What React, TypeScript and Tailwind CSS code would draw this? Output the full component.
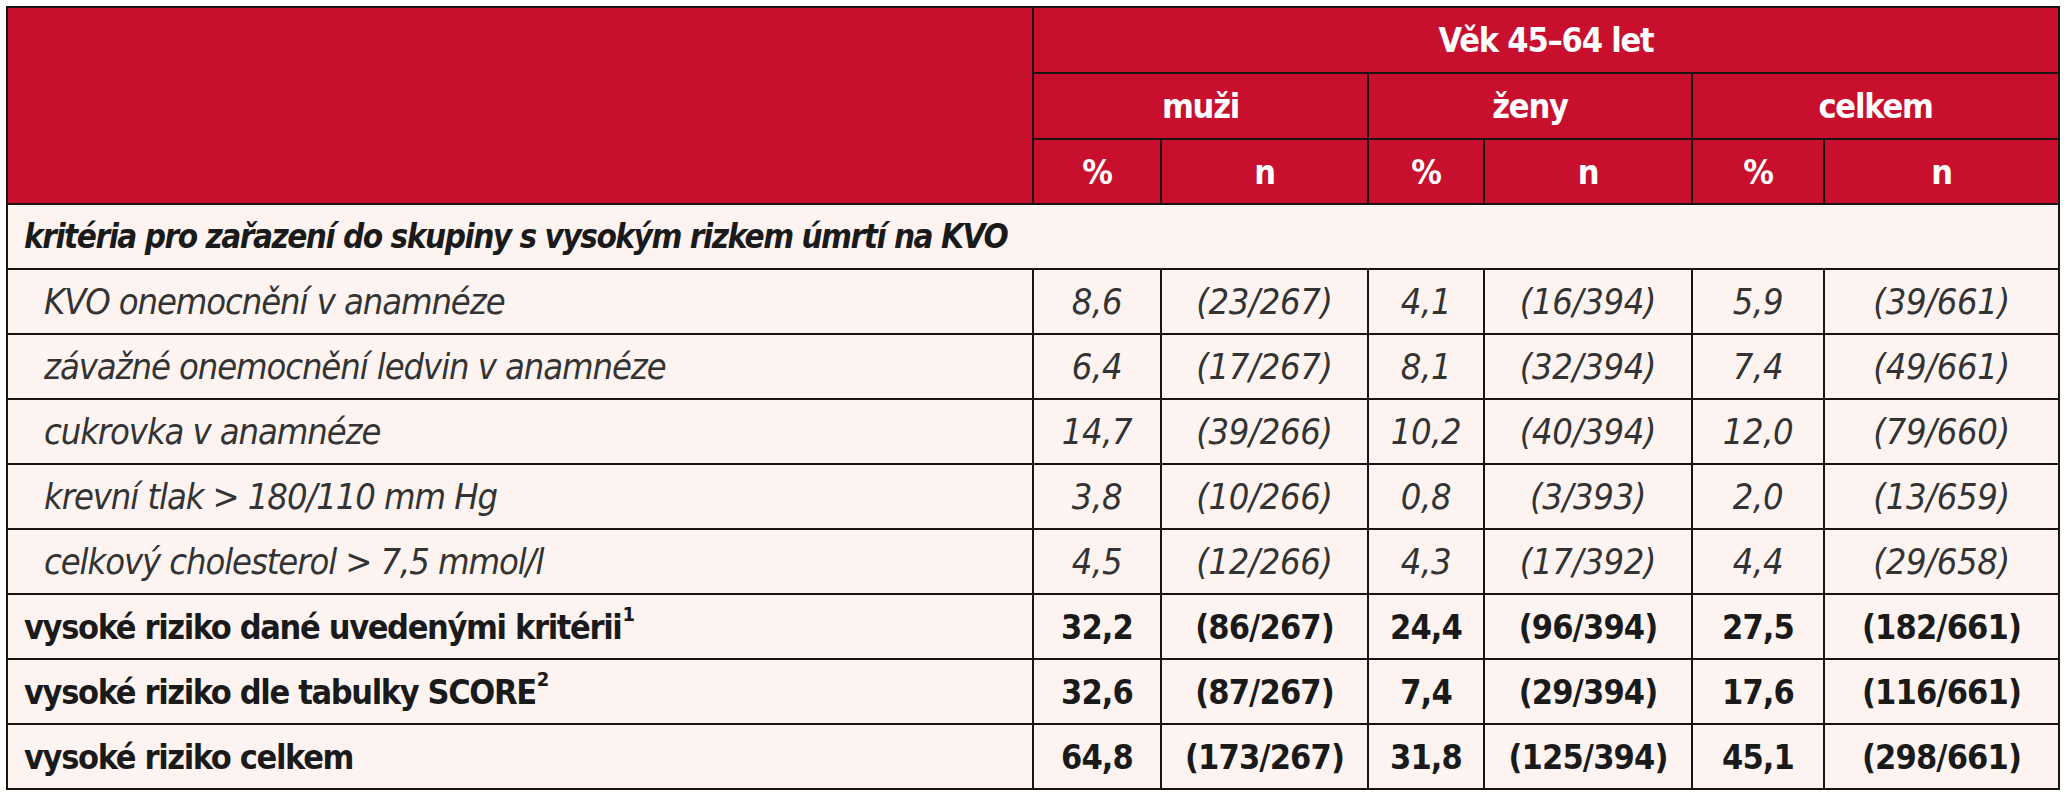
const subRows = [
  { label: "KVO onemocnění v anamnéze", v: ["8,6", "(23/267)", "4,1", "(16/394)", "5,9", "(39/661)"] },
  { label: "závažné onemocnění ledvin v anamnéze", v: ["6,4", "(17/267)", "8,1", "(32/394)", "7,4", "(49/661)"] },
  { label: "cukrovka v anamnéze", v: ["14,7", "(39/266)", "10,2", "(40/394)", "12,0", "(79/660)"] },
  { label: "krevní tlak > 180/110 mm Hg", v: ["3,8", "(10/266)", "0,8", "(3/393)", "2,0", "(13/659)"] },
  { label: "celkový cholesterol > 7,5 mmol/l", v: ["4,5", "(12/266)", "4,3", "(17/392)", "4,4", "(29/658)"] },
];

const totalRows = [
  { label: "vysoké riziko dané uvedenými kritérii", sup: "1", v: ["32,2", "(86/267)", "24,4", "(96/394)", "27,5", "(182/661)"] },
  { label: "vysoké riziko dle tabulky SCORE", sup: "2", v: ["32,6", "(87/267)", "7,4", "(29/394)", "17,6", "(116/661)"] },
  { label: "vysoké riziko celkem", sup: "", v: ["64,8", "(173/267)", "31,8", "(125/394)", "45,1", "(298/661)"] },
];

const line = "border-2 border-[#1c1212]";
const cell = "border-2 border-[#1c1212] text-center";

export default function App() {
  return (
    <div className="bg-white min-h-screen pt-[6px] pl-[6px] font-['DejaVu_Sans_Condensed','DejaVu_Sans',sans-serif] [font-stretch:condensed]">
      <table className="border-collapse table-fixed w-[2052px] leading-none">
        <colgroup>
          <col className="w-[1026px]" />
          <col className="w-[128px]" />
          <col className="w-[207px]" />
          <col className="w-[116px]" />
          <col className="w-[208px]" />
          <col className="w-[132px]" />
          <col className="w-[235px]" />
        </colgroup>
        <thead className="bg-[#c80f2e] text-white font-bold text-[34px] tracking-[-0.035em]">
          <tr className="h-[66px]">
            <th rowSpan={3} className={line}></th>
            <th colSpan={6} className={cell}>Věk 45–64 let</th>
          </tr>
          <tr className="h-[66px]">
            <th colSpan={2} className={cell}>muži</th>
            <th colSpan={2} className={cell}>ženy</th>
            <th colSpan={2} className={cell}>celkem</th>
          </tr>
          <tr className="h-[65px]">
            <th className={cell}>%</th>
            <th className={cell}>n</th>
            <th className={cell}>%</th>
            <th className={cell}>n</th>
            <th className={cell}>%</th>
            <th className={cell}>n</th>
          </tr>
        </thead>
        <tbody className="bg-[#fdf4f2]">
          <tr className="h-[65px]">
            <td colSpan={7} className={`${line} pl-[16px] font-bold italic text-[33px] tracking-[-0.045em] text-[#1a1a1a]`}>
              kritéria pro zařazení do skupiny s vysokým rizkem úmrtí na KVO
            </td>
          </tr>
          {subRows.map((r) => (
            <tr key={r.label} className="h-[65px] italic text-[36px] text-[#333]">
              <td className={`${line} pl-[36px] tracking-[-0.03em]`}>{r.label}</td>
              {r.v.map((x, i) => (
                <td key={i} className={`${cell} tracking-[-0.01em]`}>{x}</td>
              ))}
            </tr>
          ))}
          {totalRows.map((r) => (
            <tr key={r.label} className="h-[65px] font-bold text-[34px] text-[#1a1a1a]">
              <td className={`${line} pl-[16px] tracking-[-0.04em]`}>
                {r.label}
                {r.sup && <sup className="text-[20px] align-top relative top-[4px] ml-[1px]">{r.sup}</sup>}
              </td>
              {r.v.map((x, i) => (
                <td key={i} className={`${cell} tracking-[-0.025em]`}>{x}</td>
              ))}
            </tr>
          ))}
        </tbody>
      </table>
    </div>
  );
}
